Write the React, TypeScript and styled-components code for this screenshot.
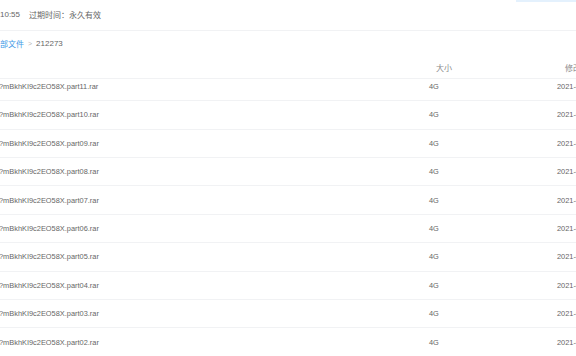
import * as React from "react";
import styled, { createGlobalStyle } from "styled-components";

const GlobalStyle = createGlobalStyle`
  html, body {
    margin: 0;
    padding: 0;
    background: #fff;
    overflow: hidden;
  }
  body {
    width: 576px;
    height: 356px;
    font-family: "Liberation Sans", "Noto Sans CJK SC", sans-serif;
    color: #666;
  }
`;

const Page = styled.div`
  width: 576px;
  height: 356px;
  overflow: hidden;
`;

const TopBar = styled.div`
  display: flex;
  align-items: flex-start;
  height: 30px;
  border-bottom: 1px solid #f1f2f4;
`;

const ShareInfo = styled.div`
  display: flex;
  gap: 9px;
  align-items: center;
  height: 28px;
  font-size: 8px;
  color: #666;
  flex: 1;
`;

const SaveButton = styled.div`
  width: 60px;
  height: 2px;
  background: #e4f1fd;
`;

const Crumbs = styled.div`
  display: flex;
  align-items: center;
  gap: 4px;
  height: 25px;
  font-size: 8px;
  color: #666;
`;

const CrumbLink = styled.span`
  color: #3d98e6;
`;

const CrumbSep = styled.span`
  color: #b8b8b8;
  font-size: 7px;
`;

const Columns = styled.div<{ $head?: boolean; $h?: number }>`
  display: grid;
  grid-template-columns: 429px 128px 200px;
  align-items: center;
  height: ${(p) => p.$h ?? 28.4}px;
  box-sizing: border-box;
  border-bottom: 1px solid #f1f2f4;
  white-space: nowrap;
  font-size: ${(p) => (p.$head ? 8 : 7.4)}px;
  color: ${(p) => (p.$head ? "#8a8a8a" : "#666")};
`;

const HeadCell = styled.span<{ $pad: number }>`
  padding-left: ${(p) => p.$pad}px;
`;

const ListViewport = styled.div`
  height: 277px;
  overflow: hidden;
`;

const List = styled.div`
  margin-top: -6.2px;
`;

const NameCell = styled.span`
  margin-left: -1px;
`;

const files = ["11", "10", "09", "08", "07", "06", "05", "04", "03", "02", "01"];

export default function App() {
  return (
    <Page>
      <GlobalStyle />
      <TopBar>
        <ShareInfo>
          <span>10:55</span>
          <span>过期时间：永久有效</span>
        </ShareInfo>
        <SaveButton />
      </TopBar>
      <Crumbs>
        <CrumbLink>部文件</CrumbLink>
        <CrumbSep>&gt;</CrumbSep>
        <span>212273</span>
      </Crumbs>
      <Columns $head $h={23}>
        <span />
        <HeadCell $pad={7}>大小</HeadCell>
        <HeadCell $pad={8}>修改日期</HeadCell>
      </Columns>
      <ListViewport>
        <List>
          {files.map((n) => (
            <Columns key={n}>
              <NameCell>?mBkhKI9c2EO58X.part{n}.rar</NameCell>
              <span>4G</span>
              <span>2021-03-12 10:55</span>
            </Columns>
          ))}
        </List>
      </ListViewport>
    </Page>
  );
}
